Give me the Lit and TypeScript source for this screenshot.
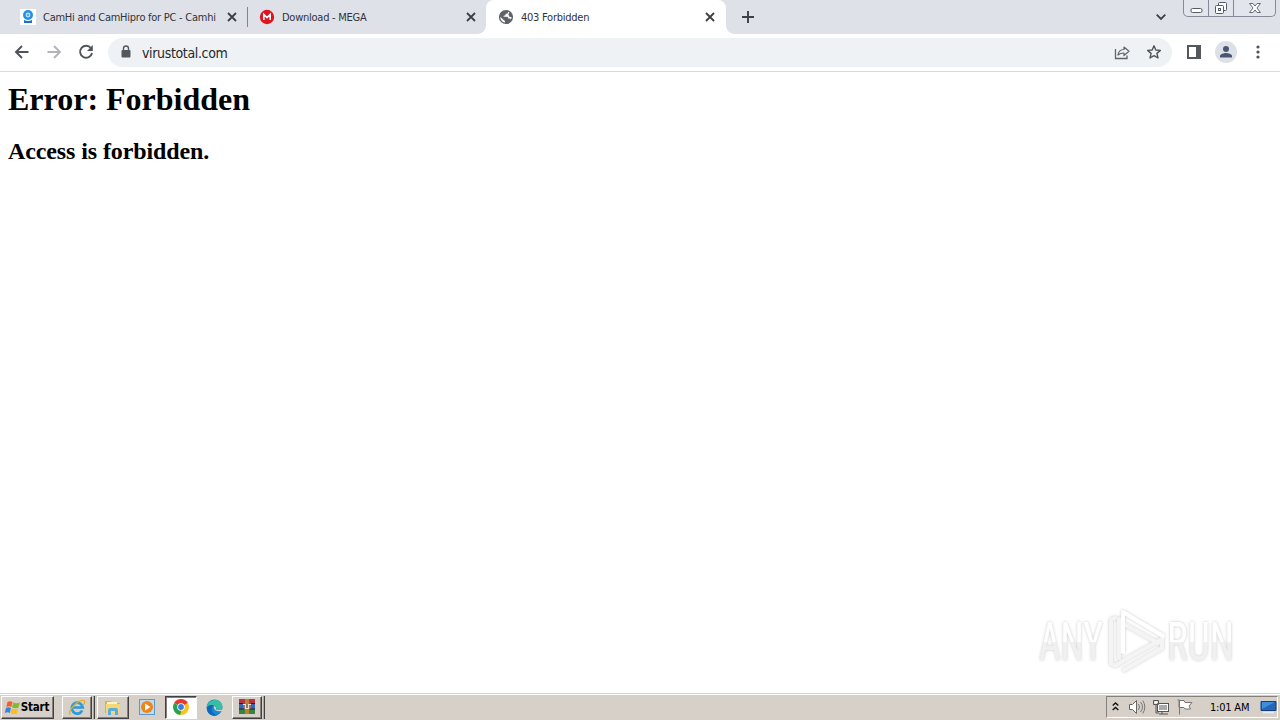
import { LitElement, html, css, svg } from "lit";
import { customElement } from "lit/decorators.js";

const closeIcon = html`<svg class="close" width="12" height="12" viewBox="0 0 12 12"><path d="M2 2l8 8M10 2l-8 8" stroke="#3c4043" stroke-width="1.8" fill="none"/></svg>`;

const camIcon = html`<svg width="16" height="16" viewBox="0 0 16 16"><rect width="16" height="16" fill="#fff"/><circle cx="8" cy="6" r="5" fill="#2490e8"/><circle cx="8" cy="6" r="2.4" fill="#c4e6ff"/><circle cx="8" cy="6" r="1.2" fill="#4da8ee"/><path d="M4 11q4 2 8 0v3H4z" fill="#1673cb"/></svg>`;
const megaIcon = html`<svg width="16" height="16" viewBox="0 0 16 16"><circle cx="8" cy="8" r="7.2" fill="#e0141e"/><path d="M4.8 11V5.4L8 8.6l3.2-3.2V11" fill="none" stroke="#fff" stroke-width="1.6"/></svg>`;
const globeIcon = html`<svg width="16" height="16" viewBox="0 0 16 16"><circle cx="8" cy="8" r="7.1" fill="#5f6368"/><path d="M9.600 2.600v.6c0 .8-.6 1.400-1.400 1.400H6.800V6c0 .4-.3.700-.7.700H4.800V8H9c.4 0 .7.300.7.700v2.100h.7c.6 0 1.100.4 1.300.9A5.700 5.700 0 0 0 13.600 8c0-.7-.1-1.300-.3-1.900h-1.500c-.8 0-1.300-.5-1.300-1.200V3z" fill="#fff" opacity=".0"/><path d="M2.300 7.700l3.300 3.200c.3.300.6.700 1.400.8v1.900C4.200 13.100 2.300 10.900 2.300 7.700z" fill="#fff"/><path d="M10.200 2.800c-.1 1.300-.6 1.800-1.800 1.900-.5 0-.9.300-.9.800 0 .8-.5 1.200-1.300 1.200-.6 0-.7.400-.7 1.100h3c1.200 0 1.700.6 1.800 1.600h1.200c.9 0 1.200.5 1.100 1.300.6-.8.9-1.700 1-2.800-1.400.1-2.300-.2-2.700-1-.2-.6 0-1-.3-1.500-.4-.7.3-1.600 1-2z" fill="#fff"/></svg>`;

const arrowIcon = (c: string, forward: boolean) => html`<svg width="16" height="16" viewBox="0 0 16 16"><path d="${forward ? "M1.5 8h12M8 2l6 6-6 6" : "M14.5 8H2.5M8 2L2 8l6 6"}" fill="none" stroke="${c}" stroke-width="1.9"/></svg>`;

const flagPath = svg`<path d="M3 1.500h5l1 2h7l-3 3.500 1.500 3H9l-1-1.500H3z" fill="#fff" stroke="#777"/><path d="M1.500 1h2v14.500" fill="none" stroke="#777" stroke-width="1"/>`;

@customElement("app-root")
export class AppRoot extends LitElement {
  static styles = css`
    :host { display: block; width: 1280px; height: 720px; overflow: hidden; }
    svg { display: block; flex: none; }
    .screen { position: relative; display: flex; flex-direction: column; height: 720px; background: #fff; font-family: "DejaVu Sans Condensed", "DejaVu Sans", sans-serif; font-stretch: condensed; }
    .tabs { display: flex; height: 34px; background: #dee1e8; flex: none; }
    .tab { display: flex; align-items: center; height: 34px; box-sizing: border-box; font-size: 11px; color: #303338; white-space: nowrap; letter-spacing: -0.25px; }
    .tab .close { margin-left: auto; }
    .first { width: 247px; padding: 0 9px 0 20px; }
    .second { width: 238px; padding: 0 9px 0 11px; }
    .current { position: relative; width: 240px; padding: 0 10px 0 12px; background: #fff; border-radius: 8px 8px 0 0; }
    .current::before, .current::after { content: ""; position: absolute; bottom: 0; width: 8px; height: 8px; }
    .current::before { left: -8px; background: radial-gradient(circle at 0 0, transparent 7.5px, #fff 8px); }
    .current::after { right: -8px; background: radial-gradient(circle at 100% 0, transparent 7.5px, #fff 8px); }
    .sep { width: 1px; height: 20px; margin-top: 7px; background: #80868b; }
    .title { margin-left: 7px; }
    .plus { margin: 10px 0 0 15px; }
    .chev { margin: 11px 16px 0 auto; }
    .controls { display: flex; width: 91px; height: 16px; margin-right: 4px; border: 1px solid #858a96; border-top: 0; border-radius: 0 0 5px 5px; background: #e2e5eb; }
    .controls div { display: flex; align-items: center; justify-content: center; width: 24px; }
    .controls div + div { border-left: 1px solid #858a96; }
    .controls div:last-child { flex: 1; }
    .toolbar { display: flex; align-items: center; height: 37px; border-bottom: 1px solid #d8dadd; padding: 0 14px; box-sizing: content-box; flex: none; }
    .nav { display: flex; gap: 16px; padding-bottom: 1px; }
    .omni { display: flex; align-items: center; width: 1064px; height: 29px; margin-left: 14px; padding: 0 10px 1px 12px; box-sizing: border-box; border-radius: 15px; background: #eff2f5; }
    .url { margin-left: 10px; padding-top: 1px; font-size: 14px; color: #25282c; letter-spacing: -0.35px; }
    .share { margin-left: auto; margin-right: 16px; }
    .tools { display: flex; align-items: center; gap: 13px; margin-left: 14px; padding-bottom: 1px; }
    .page { flex: 1; padding: 8px; color: #000; font-family: "Liberation Serif", serif; }
    h1 { margin: 0; font-size: 32px; line-height: 38px; white-space: nowrap; }
    h2 { margin: 19px 0 0; font-size: 24px; line-height: 28px; letter-spacing: -0.11px; white-space: nowrap; }
    .mark { position: absolute; left: 1030px; top: 602px; overflow: visible; }
    .mark text { font-family: Roboto, sans-serif; font-weight: 400; font-size: 53px; }
    .taskbar { display: flex; align-items: center; height: 26px; padding-left: 1px; background: #d6d0c8; border-top: 1px solid #d6d0c8; box-shadow: inset 0 1px #fff; flex: none; }
    .btn { display: flex; align-items: center; justify-content: center; height: 23px; box-sizing: border-box; border: 1px solid; border-color: #fff #404040 #404040 #fff; box-shadow: inset -1px -1px #858079; background: #d6d0c8; }
    .start { width: 53px; font-weight: bold; font-size: 11.5px; color: #000; letter-spacing: -0.2px; padding-right: 2px; }
    .app { width: 30px; }
    .stack { display: flex; width: 33px; height: 23px; box-sizing: border-box; border-right: 1px solid #404040; box-shadow: inset -1px 0 #aaa59d; }
    .ie { margin-left: 8px; }
    .files { margin-left: 2px; width: 32px; }
    .media { margin-left: 10px; }
    .pressed { margin-left: 10px; width: 32px; background: #fff; border-color: #404040 #fff #fff #404040; box-shadow: inset 1px 1px #858079; }
    .edge { margin-left: 9px; }
    .rar { margin-left: 9px; }
    .tray { display: flex; align-items: center; width: 172px; height: 22px; box-sizing: border-box; margin: 0 2px 0 auto; padding: 0 0 0 5px; border: 1px solid; border-color: #858079 #fff #fff #858079; }
    .clock { margin-left: 17px; margin-right: auto; font-size: 11px; letter-spacing: -0.2px; color: #000; white-space: nowrap; }
    .speaker { margin-left: 9px; } .net { margin-left: 7px; } .flag { margin-left: 7px; }
  `;

  render() {
    return html`<div class="screen">
      <div class="tabs">
        <div class="tab first">${camIcon}<span class="title">CamHi and CamHipro for PC - Camhi</span>${closeIcon}</div>
        <div class="sep"></div>
        <div class="tab second">${megaIcon}<span class="title">Download - MEGA</span>${closeIcon}</div>
        <div class="tab current">${globeIcon}<span class="title">403 Forbidden</span>${closeIcon}</div>
        <svg class="plus" width="14" height="14" viewBox="0 0 14 14"><path d="M7 1v12M1 7h12" stroke="#3c4043" stroke-width="1.9"/></svg>
        <svg class="chev" width="12" height="12" viewBox="0 0 12 12"><path d="M1.7 3.7L6 8l4.3-4.3" fill="none" stroke="#3c4043" stroke-width="1.8"/></svg>
        <div class="controls">
          <div><svg width="13" height="16"><rect x="1" y="8.500" width="11" height="4" rx="1.500" fill="#fff" stroke="#555b6a"/></svg></div>
          <div><svg width="14" height="16"><rect x="4.500" y="2.500" width="8" height="8" rx="1" fill="#fff" stroke="#555b6a"/><rect x="1.500" y="5.500" width="8" height="8" rx="1" fill="#fff" stroke="#555b6a"/><rect x="4.500" y="8.500" width="2" height="2" fill="none" stroke="#555b6a"/></svg></div>
          <div><svg width="14" height="16"><path d="M1.500 3.500h3.500l2 2.500 2-2.500h3.500L9 8l3.500 4.500H9L7 10l-2 2.500H1.500L5 8z" fill="#fff" stroke="#666b78"/></svg></div>
        </div>
      </div>
      <div class="toolbar">
        <div class="nav">${arrowIcon("#505458", false)}${arrowIcon("#b2b4b7", true)}
          <svg width="16" height="16" viewBox="0 0 16 16"><path d="M13 4.200A6 6 0 1 0 14 9" fill="none" stroke="#505458" stroke-width="1.900"/><path d="M14.800 1v6H9z" fill="#505458"/></svg>
        </div>
        <div class="omni">
          <svg width="12" height="16" viewBox="0 0 12 16"><rect x="1.500" y="6" width="9" height="7.500" rx="1" fill="#54585d"/><path d="M3.500 6V4.500a2.500 2.500 0 0 1 5 0V6" fill="none" stroke="#54585d" stroke-width="1.400"/></svg>
          <span class="url">virustotal.com</span>
          <svg class="share" width="16" height="16" viewBox="0 0 16 16"><path d="M1.500 5v9.500h11.500V11.500" fill="none" stroke="#5f6368" stroke-width="1.300"/><path d="M4 11c.5-3.600 2.500-5.500 6-5.500V3l5 4.300-5 4.200V9c-2.800 0-4.500.5-6 2z" fill="none" stroke="#5f6368" stroke-width="1.200" stroke-linejoin="round"/></svg>
          <svg width="16" height="16" viewBox="0 0 16 16"><path d="M8 1.800l1.800 4.200 4.600.4-3.500 3 1.100 4.600L8 11.600 4 14l1.100-4.600-3.500-3L6.200 6z" fill="none" stroke="#505458" stroke-width="1.400" stroke-linejoin="round"/></svg>
        </div>
        <div class="tools">
          <svg width="16" height="16" viewBox="0 0 16 16"><path d="M1 1h14v14H1zM3 3v10h7V3z" fill="#54585d" fill-rule="evenodd"/></svg>
          <svg width="22" height="22" viewBox="0 0 22 22"><circle cx="11" cy="11" r="11" fill="#dce1e7"/><circle cx="11" cy="8" r="3" fill="#4a5572"/><path d="M5 16.500v-1.500c0-2 4-3 6-3s6 1 6 3v1.500z" fill="#4a5572"/></svg>
          <svg width="16" height="16" viewBox="0 0 16 16"><g fill="#505458"><circle cx="8" cy="3" r="1.600"/><circle cx="8" cy="8" r="1.600"/><circle cx="8" cy="13" r="1.600"/></g></svg>
        </div>
      </div>
      <div class="page"><h1>Error: Forbidden</h1><h2>Access is forbidden.</h2></div>
      <div class="taskbar">
        <div class="btn start">
          <svg width="17" height="17" viewBox="0 0 17 17"><path d="M3.500 3q2.500-1.700 5 0L7.300 8q-2.500-1.600-5 0z" fill="#ef602c"/><path d="M9.300 3.500q3 1.500 6.500 0L14.500 8.500q-3 1.600-6.500 0z" fill="#83b930"/><path d="M2 9q2.500-1.600 5 0l-1.200 5q-2.500-1.600-5 0z" fill="#3984d8"/><path d="M7.800 9.500q3 1.500 6.300 0l-1.300 5q-3 1.500-6.300 0z" fill="#fbbd25"/></svg>
          <span>Start</span></div>
        <div class="stack ie"><div class="btn app"><svg width="20" height="20" viewBox="0 0 20 20"><path d="M15.200 13.500a5.500 5.500 0 1 1 .5-3H6" fill="none" stroke="#299bdd" stroke-width="2.700"/><path d="M3.500 17.500C-1 15 11 2.500 17 3.500c1.700.7 0 3.500-1 5" fill="none" stroke="#e5ae26" stroke-width="1.300"/></svg></div></div>
        <div class="btn files"><svg width="18" height="18" viewBox="0 0 18 18"><path d="M1 3h6l1 2h8v10H1z" fill="#d9b548"/><path d="M3 4h10v8H3z" fill="#fff5c4"/><path d="M2 6h14v9H2z" fill="#f4d878"/><path d="M4 17v-5q0-2 2-2h6q2 0 2 2v5h-3v-4H7v4z" fill="#5aaede"/></svg></div>
        <svg class="media" width="16" height="16" viewBox="0 0 16 16"><rect x=".5" y=".5" width="15" height="15" fill="#bddcf1" stroke="#5b9bcc"/><circle cx="8" cy="8" r="6" fill="#f28316"/><path d="M6 4.500v7L11.500 8z" fill="#fff"/></svg>
        <div class="btn pressed"><svg width="16" height="16" viewBox="0 0 16 16"><path d="M8 8L1.100 4A8 8 0 0 1 14.900 4z" fill="#e33b2e"/><path d="M8 8l6.900-4A8 8 0 0 1 8 16z" fill="#fbc316"/><path d="M8 8v8A8 8 0 0 1 1.100 4z" fill="#2ca14c"/><path d="M11.300 10L8 16l-1-.1L9 10z" fill="#fbc316"/><circle cx="8" cy="8" r="3.800" fill="#fff"/><circle cx="8" cy="8" r="2.900" fill="#397de4"/></svg></div>
        <svg class="edge" width="17" height="17" viewBox="0 0 17 17"><circle cx="8.500" cy="8.500" r="8" fill="#168bd5"/><path d="M1 7C3 0 14-2 16.500 7c.5 4-4 5-6.500 4 1-1 .5-4-2-4.500C5 6 2 6.500 1 9z" fill="#36bfa3"/><path d="M1 8c3-3 6-2 6.500-1-3 2-2 7 2 8.500l3 .3C7 19 0 15 1 8z" fill="#1268b8"/><path d="M8 7c-1 3 2 6 7 5l1.500 1 .5-2-2-.5c-2 1-5 .5-5-.5 0-1 .5-2-2-3z" fill="#d6d0c8"/></svg>
        <div class="stack rar"><div class="btn app"><svg width="18" height="18" viewBox="0 0 18 18"><path d="M1 1h16v5H1z" fill="#b8343c"/><path d="M1 6h16v5H1z" fill="#3865b4"/><path d="M1 11h16v5H1z" fill="#36843e"/><path d="M7 1h4v15H7z" fill="#bc8032"/><path d="M5 6h8v5H5z" fill="#eee3c8"/><path d="M6 7v4M9 6v4M12 7v4" stroke="#4b3332" stroke-width="1.200"/><path d="M1 5.500h4M13 5.500h4M1 11h5M12 11h5" stroke="#222"/></svg></div></div>
        <div class="tray">
          <svg width="7" height="12" viewBox="0 0 7 12"><path d="M.7 4.500L3.500 2l2.800 2.500M.7 9l2.800-2.500L6.300 9" fill="none" stroke="#111" stroke-width="1.400"/></svg>
          <svg class="speaker" width="18" height="16" viewBox="0 0 18 16"><path d="M1.500 5.500h3l4-4v13l-4-4h-3z" fill="#fff" stroke="#666"/><path d="M10.500 5q2 3 0 6M12.500 3q4 5 0 10M14.800 1.500q4 6.500 0 13" fill="none" stroke="#777"/></svg>
          <svg class="net" width="16" height="16" viewBox="0 0 16 16"><rect x="4.500" y="4.500" width="11" height="8" fill="#fff" stroke="#555"/><rect x="6" y="6" width="8" height="5" fill="#aaa"/><path d="M9 13v2M6 15h9M.5 1.500h5v4h-5zM3 6v8h3" fill="none" stroke="#555"/><path d="M1.500 2.500h3v2h-3z" fill="#fff"/></svg>
          <svg class="flag" width="17" height="16" viewBox="0 0 17 16">${flagPath}</svg>
          <span class="clock">1:01 AM</span>
          <svg width="17" height="14" viewBox="0 0 17 14"><path d="M1 1.500h15v9H1z" fill="#2466b8" stroke="#163e7e"/><path d="M2 2h13L2 9z" fill="#3f8ddd"/><path d="M3 12.500h11" stroke="#e7edf5" stroke-width="1.500"/></svg>
        </div>
      </div>
      <svg class="mark" width="230" height="88" viewBox="0 0 230 88">
        <defs><linearGradient id="fade" x1="0" x2="0" y1="0" y2="78" gradientUnits="userSpaceOnUse"><stop offset=".51" stop-color="#fff"/><stop offset=".52" stop-color="#f0f0f0"/></linearGradient>
        <filter id="glow" x="-10%" y="-15%" width="120%" height="130%"><feDropShadow dx="0" dy="0" stdDeviation="1.600" flood-color="#777" flood-opacity=".42"/></filter></defs>
        <g filter="url(#glow)" fill="url(#fade)">
          <text x="9" y="58" textLength="64" lengthAdjust="spacingAndGlyphs">ANY</text>
          <text x="137" y="58" textLength="67" lengthAdjust="spacingAndGlyphs">RUN</text>
          <g fill="none" stroke-width="4" stroke-linejoin="round" stroke-linecap="round"><path d="M85 16l-4 1.500v44l4 2 6-3M94 68l38-22V38" stroke="#f4f4f4"/><path d="M89 56V17M94 22l34 19M91 60l41-23" stroke="#f4f4f4"/><path d="M93 50V10l40 24" stroke="#fff"/></g>
        </g>
      </svg>
    </div>`;
  }
}
